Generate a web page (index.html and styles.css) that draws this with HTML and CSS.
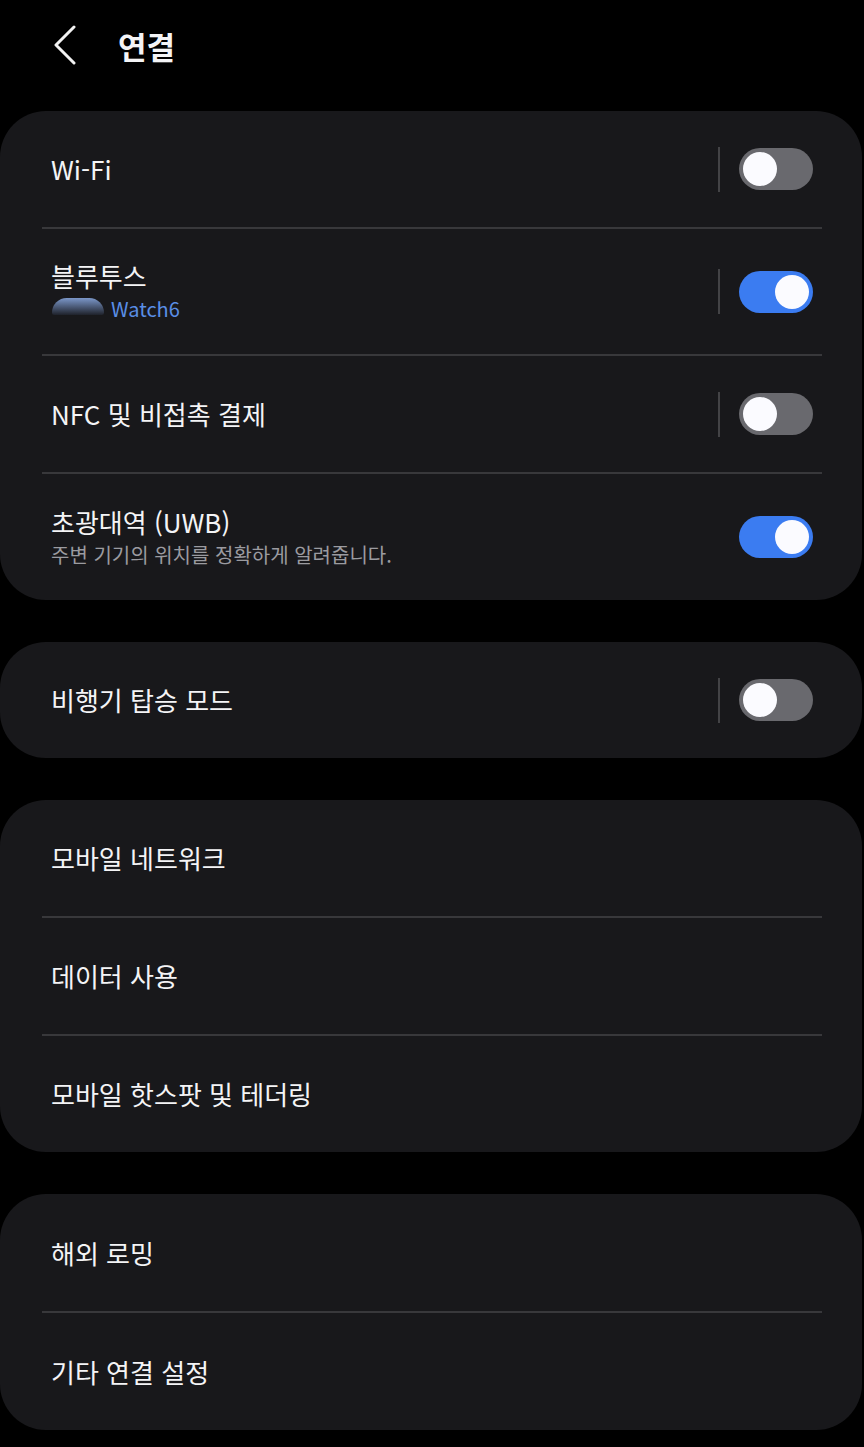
FILE: index.html
```html
<!DOCTYPE html>
<html lang="ko">
<head>
    <meta charset="UTF-8">
    <meta name="viewport" content="width=device-width, initial-scale=1.0">
    <title>연결</title>
    <link rel="stylesheet" href="styles.css">
</head>
<body>
    <div class="header">
        <svg class="back" width="24" height="40" viewBox="0 0 24 40">
            <polyline points="21,2 3,20 21,38" fill="none" stroke="#f2f2f2" stroke-width="3" stroke-linecap="round" stroke-linejoin="round"/>
        </svg>
        <h1>연결</h1>
    </div>

    <div class="card">
        <div class="row">
            <div class="label"><span class="title">Wi-Fi</span></div>
            <span class="sep"></span>
            <span class="toggle"></span>
        </div>
        <div class="divider"></div>
        <div class="row tall">
            <div class="label">
                <span class="title">블루투스</span>
                <span class="sub blue"><span class="blob"></span>Watch6</span>
            </div>
            <span class="sep"></span>
            <span class="toggle on"></span>
        </div>
        <div class="divider"></div>
        <div class="row">
            <div class="label"><span class="title">NFC 및 비접촉 결제</span></div>
            <span class="sep"></span>
            <span class="toggle"></span>
        </div>
        <div class="divider"></div>
        <div class="row tall">
            <div class="label">
                <span class="title">초광대역 (UWB)</span>
                <span class="sub">주변 기기의 위치를 정확하게 알려줍니다.</span>
            </div>
            <span class="toggle on"></span>
        </div>
    </div>

    <div class="card">
        <div class="row">
            <div class="label"><span class="title">비행기 탑승 모드</span></div>
            <span class="sep"></span>
            <span class="toggle"></span>
        </div>
    </div>

    <div class="card">
        <div class="row">
            <div class="label"><span class="title">모바일 네트워크</span></div>
        </div>
        <div class="divider"></div>
        <div class="row">
            <div class="label"><span class="title">데이터 사용</span></div>
        </div>
        <div class="divider"></div>
        <div class="row">
            <div class="label"><span class="title">모바일 핫스팟 및 테더링</span></div>
        </div>
    </div>

    <div class="card last">
        <div class="row">
            <div class="label"><span class="title">해외 로밍</span></div>
        </div>
        <div class="divider"></div>
        <div class="row">
            <div class="label"><span class="title">기타 연결 설정</span></div>
        </div>
    </div>
</body>
</html>
```

FILE: styles.css
```css
body {
    margin: 0;
    background-color: #000;
    color: #f4f4f6;
    font-family: "Noto Sans CJK KR", "Noto Sans", sans-serif;
}

.header {
    height: 90px;
    margin-bottom: 21px;
    display: flex;
    align-items: center;
    padding-left: 53px;
}

.back {
    display: block;
}

.header h1 {
    margin: 0 0 0 41px;
    font-size: 31px;
    font-weight: 700;
    line-height: 1;
}

.card {
    background: #18181b;
    border-radius: 46px;
    margin: 0 2px 42px 0;
}

.row {
    height: 116px;
    display: flex;
    align-items: center;
    padding: 0 49px 0 51px;
}

.row.tall {
    height: 125px;
}

.row.tall:last-child {
    height: 126px;
}

.card.last .row {
    height: 117px;
}

.label {
    flex: 1;
    display: flex;
    flex-direction: column;
}

.title {
    font-size: 26px;
    line-height: 32px;
}

.sub {
    margin-top: 3px;
    font-size: 20px;
    line-height: 28px;
    color: #9b9ba0;
    display: flex;
    align-items: center;
}

.sub.blue {
    color: #5a8ee6;
}

.blob {
    width: 52px;
    height: 17px;
    margin: -6px 7px 0 1px;
    border-radius: 26px 26px 4px 4px;
    background: linear-gradient(#7b97c9, rgba(90, 120, 180, 0.1));
}

.divider {
    height: 2px;
    margin: 0 40px 0 42px;
    background: #38383b;
}

.sep {
    width: 2px;
    height: 45px;
    background: #434346;
    margin-right: 19px;
}

.toggle {
    width: 74px;
    height: 42px;
    border-radius: 21px;
    background: #69696e;
    display: flex;
    align-items: center;
    padding: 0 4px;
    box-sizing: border-box;
}

.toggle::after {
    content: "";
    width: 34px;
    height: 34px;
    border-radius: 50%;
    background: #fbfbff;
}

.toggle.on {
    background: #3b7cf1;
    justify-content: flex-end;
}
```
